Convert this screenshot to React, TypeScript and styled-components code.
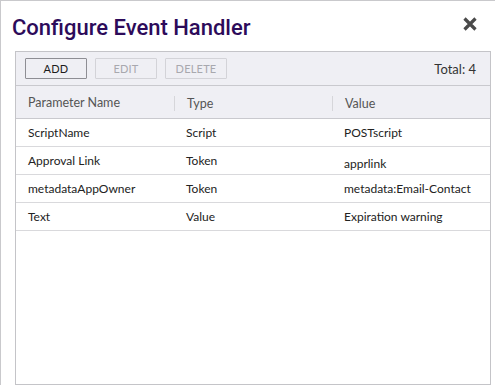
import React from "react";
import styled, { createGlobalStyle } from "styled-components";

const Global = createGlobalStyle`
  html, body { margin: 0; padding: 0; background: #ffffff; overflow: hidden; }
  body { font-family: "Lato", "Open Sans", sans-serif; }
`;

const Dialog = styled.div`
  width: 495px;
  height: 385px;
  box-sizing: border-box;
  border-top: 1px solid #c9c9cc;
  border-left: 1px solid #c9c9cc;
  background: #fff;
  padding: 0 0 0 14px;
  display: flex;
  flex-direction: column;
  overflow: hidden;
`;

const Header = styled.div`
  display: flex;
  align-items: center;
  justify-content: space-between;
  width: 476px;
  height: 50px;
  box-sizing: border-box;
  padding: 2px 13px 0 0;
`;

const Title = styled.h1`
  margin: 0 0 0 -3px;
  font-family: "Roboto", sans-serif;
  font-size: 22px;
  font-weight: 500;
  color: #2d0b5a;
  letter-spacing: 0;
`;

const Close = styled.button`
  border: none;
  background: none;
  padding: 0;
  margin: -6px 0 0 0;
  width: 16px;
  height: 16px;
  display: flex;
  align-items: center;
  justify-content: center;
  cursor: pointer;
`;

const Panel = styled.div`
  width: 476px;
  height: 334px;
  box-sizing: border-box;
  border: 1px solid #c4c4c8;
  display: flex;
  flex-direction: column;
`;

const Toolbar = styled.div`
  background: #efeff4;
  height: 33px;
  border-bottom: 1px solid #c9c9ce;
  display: flex;
  align-items: center;
  padding: 0 14px 0 9px;
  gap: 8px;
`;

const ToolButton = styled.button<{ $disabled?: boolean }>`
  width: 62px;
  height: 21px;
  box-sizing: border-box;
  border: 1px solid ${(p) => (p.$disabled ? "#d3d3d8" : "#8e8e94")};
  border-radius: 1px;
  background: #efeff4;
  color: ${(p) => (p.$disabled ? "#a8a8ae" : "#1c1c1c")};
  font-family: "Lato", sans-serif;
  font-size: 11px;
  letter-spacing: 0.2px;
  padding: 0;
  cursor: ${(p) => (p.$disabled ? "default" : "pointer")};
`;

const Total = styled.span`
  margin-left: auto;
  font-size: 13px;
  color: #333;
`;

const Grid = styled.div`
  display: grid;
  grid-template-columns: 158px 158px 158px;
`;

const HeadRow = styled(Grid)`
  background: #efeff4;
  height: 32px;
  border-bottom: 1px solid #c9c9ce;
`;

const HeadCell = styled.div<{ $sep?: boolean }>`
  display: flex;
  align-items: center;
  padding-left: 12px;
  font-size: 12.5px;
  color: #555;
  border-left: ${(p) => (p.$sep ? "1px solid #d6d6da" : "none")};
  margin: ${(p) => (p.$sep ? "10px 0 8px 0" : "0")};
  box-sizing: border-box;
`;

const Row = styled(Grid)`
  height: 27px;
  border-bottom: 1px solid #d9d9dc;
`;

const Cell = styled.div<{ $shift?: number }>`
  display: flex;
  align-items: center;
  padding-left: 12px;
  padding-top: ${(p) => (p.$shift ? `${p.$shift * 2}px` : "0")};
  font-size: 12px;
  color: #222;
`;

const rows: { name: string; type: string; value: string; shift?: number }[] = [
  { name: "ScriptName", type: "Script", value: "POSTscript" },
  { name: "Approval Link", type: "Token", value: "apprlink", shift: 3 },
  { name: "metadataAppOwner", type: "Token", value: "metadata:Email-Contact" },
  { name: "Text", type: "Value", value: "Expiration warning" },
];

export default function App() {
  return (
    <>
      <Global />
      <Dialog>
        <Header>
          <Title>Configure Event Handler</Title>
          <Close aria-label="Close">
            <svg width="14" height="14" viewBox="0 0 14 14">
              <path d="M1.5 1.5 L12.5 12.5 M12.5 1.5 L1.5 12.5" stroke="#4a4a4a" strokeWidth="3.2" strokeLinecap="butt" />
            </svg>
          </Close>
        </Header>
        <Panel>
          <Toolbar>
            <ToolButton>ADD</ToolButton>
            <ToolButton $disabled>EDIT</ToolButton>
            <ToolButton $disabled>DELETE</ToolButton>
            <Total>Total: 4</Total>
          </Toolbar>
          <HeadRow>
            <HeadCell>Parameter Name</HeadCell>
            <HeadCell $sep>Type</HeadCell>
            <HeadCell $sep>Value</HeadCell>
          </HeadRow>
          {rows.map((r) => (
            <Row key={r.name}>
              <Cell>{r.name}</Cell>
              <Cell>{r.type}</Cell>
              <Cell $shift={r.shift}>{r.value}</Cell>
            </Row>
          ))}
        </Panel>
      </Dialog>
    </>
  );
}
